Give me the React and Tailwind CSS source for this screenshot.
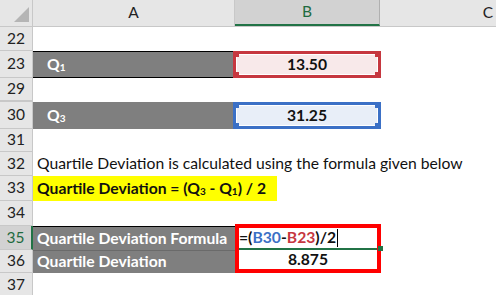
import React from "react";

const font = { fontFamily: "Lato, 'Open Sans', sans-serif" };

function RowHead({ n, h, active, thick }) {
  return (
    <div
      className={`flex items-center justify-center w-[33px] shrink-0 border-r border-b border-[#c8c8c8] text-[15.5px] ${
        active ? "bg-[#d2d2d2] text-[#1f6b3f] border-r-2 border-r-[#217346]" : "bg-[#e6e6e6] text-[#222]"
      } ${thick ? "border-b-2" : ""}`}
      style={{ height: h }}
    >
      {n}
    </div>
  );
}

function Handles({ color }) {
  return (
    <>
      <span className={`absolute -left-[3px] -top-[3px] w-[6px] h-[6px] ${color}`} />
      <span className={`absolute -right-[3px] -top-[3px] w-[6px] h-[6px] ${color}`} />
      <span className={`absolute -left-[3px] -bottom-[3px] w-[6px] h-[6px] ${color}`} />
      <span className={`absolute -right-[3px] -bottom-[3px] w-[6px] h-[6px] ${color}`} />
    </>
  );
}

function Empty({ n, h, thick }) {
  return (
    <div className="flex" style={{ height: h }}>
      <RowHead n={n} h={h} thick={thick} />
      <div className="flex-1" />
    </div>
  );
}

export default function App() {
  return (
    <div className="w-[496px] h-[295px] overflow-hidden bg-white text-[#111] text-[15.7px]" style={font}>
      {/* COLUMN HEADERS */}
      <div className="flex h-[27px] bg-[#e6e6e6] border-b border-[#c8c8c8]">
        <div className="w-[33px] shrink-0 border-r border-[#c8c8c8] relative">
          <span className="absolute right-[3px] bottom-[4px] w-0 h-0 border-l-[15px] border-l-transparent border-b-[15px] border-b-[#b5b5b5]" />
        </div>
        <div className="w-[202px] shrink-0 flex items-center justify-center text-[15.5px] text-[#222] border-r border-[#c8c8c8]">A</div>
        <div className="w-[145px] shrink-0 flex items-center justify-center text-[15.5px] text-[#1f6b3f] bg-[#d2d2d2] border-b-2 border-[#217346] border-r border-r-[#b0b0b0]">B</div>
        <div className="flex-1 flex items-center justify-end pr-[3px] text-[15.5px] text-[#222]">C</div>
      </div>

      <Empty n="22" h={24} />

      {/* 23 */}
      <div className="flex h-[27px]">
        <RowHead n="23" h={27} />
        <div className="w-[200px] shrink-0 bg-[#7f7f7f] border-y border-black flex items-center pl-[14px] text-white font-bold">
          Q<sub className="text-[10px] font-bold">1</sub>
        </div>
        <div className="w-[148px] shrink-0 relative border-[3px] border-[#c6373f] bg-white p-[1px]">
          <div className="w-full h-full bg-[#f8e9ea] flex items-center justify-center font-bold leading-none">13.50</div>
          <Handles color="bg-[#c6373f]" />
        </div>
      </div>

      <Empty n="29" h={24} thick />

      {/* 30 */}
      <div className="flex h-[27px]">
        <RowHead n="30" h={27} />
        <div className="w-[200px] shrink-0 bg-[#7f7f7f] flex items-center pl-[14px] text-white font-bold">
          Q<sub className="text-[10px] font-bold">3</sub>
        </div>
        <div className="w-[148px] shrink-0 relative border-[3px] border-[#3b70c6] bg-white p-[1px]">
          <div className="w-full h-full bg-[#e8eef8] flex items-center justify-center font-bold leading-none">31.25</div>
          <Handles color="bg-[#3b70c6]" />
        </div>
      </div>

      <Empty n="31" h={23} />

      {/* 32 */}
      <div className="flex h-[24px]">
        <RowHead n="32" h={24} />
        <div className="flex-1 flex items-center pl-[4px] whitespace-nowrap">
          Quartile Deviation is calculated using the formula given below
        </div>
      </div>

      {/* 33 */}
      <div className="flex h-[25px]">
        <RowHead n="33" h={25} />
        <div className="w-[244px] shrink-0 bg-[#ffff00] flex items-center pl-[4px] font-bold whitespace-nowrap">
          Quartile Deviation = (Q<sub className="text-[10px]">3</sub>&nbsp;- Q<sub className="text-[10px]">1</sub>) / 2
        </div>
      </div>

      <Empty n="34" h={25} />

      {/* 35-36 */}
      <div className="flex h-[47px]">
        <div className="flex flex-col">
          <RowHead n="35" h={24} active />
          <RowHead n="36" h={23} />
        </div>
        <div className="w-[202px] shrink-0 flex flex-col border-t border-black">
          <div className="h-[24px] bg-[#7f7f7f] flex items-center pl-[4px] text-white font-bold whitespace-nowrap border-b border-[#6a6a6a]">
            Quartile Deviation Formula
          </div>
          <div className="h-[22px] bg-[#7f7f7f] flex items-center pl-[4px] text-white font-bold">
            Quartile Deviation
          </div>
        </div>
        <div className="w-[146px] h-[49px] shrink-0 -mt-[2px] border-[4px] border-[#ff0000] flex flex-col">
          <div className="h-[22px] shrink-0 flex items-center font-bold border-b-2 border-[#217346] relative">
            <span>=(</span>
            <span className="text-[#3b70c6]">B30</span>
            <span>-</span>
            <span className="text-[#c6373f]">B23</span>
            <span>)/2</span>
            <span className="ml-[1px] w-px h-[18px] bg-black" />
            <span className="absolute -right-[6px] -bottom-[3px] w-[5px] h-[5px] bg-[#217346]" />
          </div>
          <div className="flex-1 flex items-center justify-center font-bold leading-none">8.875</div>
        </div>
      </div>

      <Empty n="37" h={24} />
    </div>
  );
}
